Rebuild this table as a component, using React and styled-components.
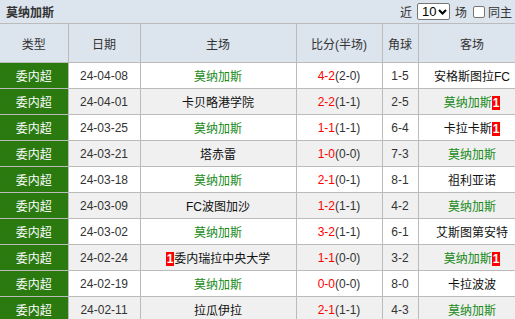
import React from 'react'
import styled, { createGlobalStyle } from 'styled-components'

const GlobalStyle = createGlobalStyle`
  html, body {
    margin: 0;
    padding: 0;
    overflow: hidden;
    background: #fff;
  }
  body {
    font-family: 'Liberation Sans', 'Noto Sans CJK SC', sans-serif;
    font-size: 12px;
    color: #333;
  }
`

const Wrap = styled.div`
  width: 526px;
`

const TitleBar = styled.div`
  height: 23px;
  background: #dce4ee;
  display: flex;
  align-items: center;
  justify-content: space-between;
  padding-left: 6px;
  box-sizing: border-box;
`

const Title = styled.span`
  font-weight: bold;
  font-size: 12px;
  color: #333;
`

const Controls = styled.div`
  display: flex;
  align-items: center;
  gap: 5px;
  font-size: 12px;
  color: #333;
  margin-right: 3px;
`

const FakeSelect = styled.div`
  width: 33px;
  height: 17px;
  box-sizing: border-box;
  border: 1px solid #767676;
  border-radius: 2px;
  background: #fff;
  display: flex;
  align-items: center;
  justify-content: space-between;
  padding: 0 2px 0 4px;
  font-size: 13px;
  color: #000;
`

const Check = styled.span`
  width: 12px;
  height: 12px;
  box-sizing: border-box;
  border: 1px solid #767676;
  border-radius: 2px;
  background: #fff;
  margin-left: 1px;
`

const Label = styled.span`
  display: flex;
  align-items: center;
  gap: 3px;
`

const Knob = styled.span`
  width: 8px;
  height: 10px;
  border-radius: 2px;
  background: #777;
`

const Table = styled.table`
  width: 526px;
  border-collapse: collapse;
  table-layout: fixed;
`

const Th = styled.th`
  height: 38px;
  background: #dce4ee;
  border: 1px solid #bbb;
  border-left: ${p => (p.first ? 'none' : '1px solid #bbb')};
  font-weight: normal;
  font-size: 12px;
  color: #333;
  padding: 0;
  text-align: center;
`

const Tr = styled.tr`
  background: ${p => (p.alt ? '#f0f0f0' : '#fff')};
`

const Td = styled.td`
  height: 25px;
  border: 1px solid #bbb;
  border-left: ${p => (p.first ? 'none' : '1px solid #bbb')};
  padding: 0;
  text-align: center;
  white-space: nowrap;
  overflow: hidden;
  color: #333;
  font-size: 12px;
`

const League = styled(Td)`
  background: #2a7a10;
  color: #fff;
`

const Team = styled.span`
  color: ${p => (p.green ? '#178a17' : '#111')};
`

const Badge = styled.span`
  display: inline-block;
  background: #f00;
  color: #fff;
  font-weight: bold;
  font-size: 12px;
  line-height: 14px;
  padding: 0 1px;
`

const Score = styled.span`
  color: #f00;
`

const rows = [
  ['24-04-08', '莫纳加斯', '', '4-2', '2-0', '1-5', '安格斯图拉FC', ''],
  ['24-04-01', '卡贝略港学院', '', '2-2', '1-1', '2-5', '莫纳加斯', 'r'],
  ['24-03-25', '莫纳加斯', '', '1-1', '1-1', '6-4', '卡拉卡斯', 'r'],
  ['24-03-21', '塔赤雷', '', '1-0', '0-0', '7-3', '莫纳加斯', ''],
  ['24-03-18', '莫纳加斯', '', '2-1', '0-1', '8-1', '祖利亚诺', ''],
  ['24-03-09', 'FC波图加沙', '', '1-2', '1-1', '4-2', '莫纳加斯', ''],
  ['24-03-02', '莫纳加斯', '', '3-2', '1-1', '6-1', '艾斯图第安特', ''],
  ['24-02-24', '委内瑞拉中央大学', 'l', '1-1', '0-0', '3-2', '莫纳加斯', 'r'],
  ['24-02-19', '莫纳加斯', '', '0-0', '0-0', '8-0', '卡拉波波', ''],
  ['24-02-11', '拉瓜伊拉', '', '2-1', '1-1', '4-3', '莫纳加斯', '']
]

const TEAM = '莫纳加斯'

export default function App () {
  return (
    <Wrap>
      <GlobalStyle />
      <TitleBar>
        <Title>莫纳加斯</Title>
        <Controls>
          <span>近</span>
          <FakeSelect>
            <span>10</span>
            <svg width='9' height='6' viewBox='0 0 9 6'>
              <path d='M1 1 L4.5 4.5 L8 1' fill='none' stroke='#000' strokeWidth='2' />
            </svg>
          </FakeSelect>
          <span>场</span>
          <Label>
            <Check />
            <span>同主</span>
            <Knob />
          </Label>
        </Controls>
      </TitleBar>
      <Table>
        <colgroup>
          <col style={{ width: 68 }} />
          <col style={{ width: 72 }} />
          <col style={{ width: 156 }} />
          <col style={{ width: 86 }} />
          <col style={{ width: 36 }} />
          <col style={{ width: 108 }} />
        </colgroup>
        <thead>
          <tr>
            <Th first>类型</Th>
            <Th>日期</Th>
            <Th>主场</Th>
            <Th>比分(半场)</Th>
            <Th>角球</Th>
            <Th>客场</Th>
          </tr>
        </thead>
        <tbody>
          {rows.map(([date, home, hb, score, half, corner, away, ab], i) => (
            <Tr key={date} alt={i % 2 === 1}>
              <League first>委内超</League>
              <Td>{date}</Td>
              <Td>
                {hb && <Badge>1</Badge>}
                <Team green={home === TEAM}>{home}</Team>
              </Td>
              <Td>
                <Score>{score}</Score>({half})
              </Td>
              <Td>{corner}</Td>
              <Td>
                <Team green={away === TEAM}>{away}</Team>
                {ab && <Badge>1</Badge>}
              </Td>
            </Tr>
          ))}
        </tbody>
      </Table>
    </Wrap>
  )
}
